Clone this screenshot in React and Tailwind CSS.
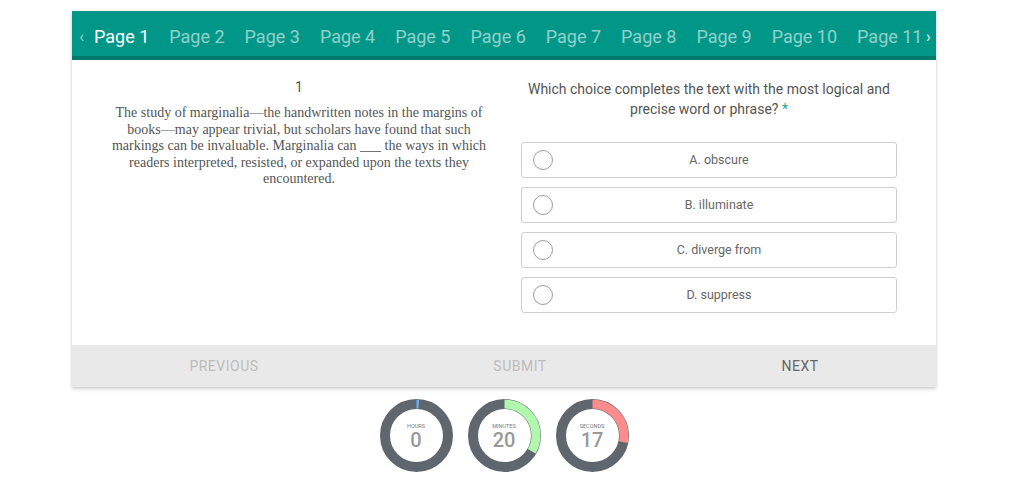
import { useState } from "react";

const pages = ["Page 1", "Page 2", "Page 3", "Page 4", "Page 5", "Page 6", "Page 7", "Page 8", "Page 9", "Page 10", "Page 11"];

const choices = ["A. obscure", "B. illuminate", "C. diverge from", "D. suppress"];

const timers = [
  { label: "HOURS", value: "0", part: 0.012, color: "#6fb1f0" },
  { label: "MINUTES", value: "20", part: 20 / 60, color: "#b2f7ae" },
  { label: "SECONDS", value: "17", part: 17 / 60, color: "#fb8c8c" },
];

export default function App() {
  const [picked, setPicked] = useState(null);

  return (
    <div className="min-h-screen bg-white pt-[11px] font-['Roboto',sans-serif]">
      <div className="ml-[72px] w-[864px] bg-white shadow-[0_2px_4px_rgba(0,0,0,0.18),0_0_2px_rgba(0,0,0,0.08)]">
        <nav className="relative flex h-[49px] items-stretch overflow-hidden border-b-[4px] border-[#00796b] bg-[#009688] pt-[6px]">
          <span className="flex w-[12px] shrink-0 items-center justify-end text-[16px] leading-none text-white/60">‹</span>
          {pages.map((page, index) => (
            <span
              key={page}
              className={`relative flex shrink-0 items-center px-[10px] text-[18px] ${index === 0 ? "text-white" : "text-white/55"}`}
            >
              {page}
              {index === 0 && <span className="absolute bottom-[-4px] left-0 right-0 h-[3px] bg-[#4db6ac]" />}
            </span>
          ))}
          <span className="absolute right-0 top-0 flex h-full w-[10px] items-center bg-[#009688] pt-[6px] text-[16px] leading-none text-white/90">›</span>
        </nav>

        <div className="grid h-[285px] grid-cols-2 px-[22px]">
          <div className="flex flex-col items-center pt-[18px] text-center">
            <div className="text-[14px] leading-[18px] text-[#555]">1</div>
            <p className="mt-[9px] w-[378px] font-['Liberation_Serif',serif] text-[14px] leading-[16.5px] text-[#555]">
              The study of marginalia—the handwritten notes in the margins of books—may appear trivial, but scholars have found that such markings can be invaluable. Marginalia can ___ the ways in which readers interpreted, resisted, or expanded upon the texts they encountered.
            </p>
          </div>

          <div className="flex flex-col items-center pt-[19px]">
            <div className="w-[372px] text-center text-[14px] leading-[20px] text-[#555]">
              Which choice completes the text with the most logical and precise word or phrase? <span className="text-[#26a69a]">*</span>
            </div>
            <div className="mt-[23px] flex w-[376px] flex-col gap-[9px]">
              {choices.map((choice, index) => (
                <button
                  key={choice}
                  type="button"
                  onClick={() => setPicked(index)}
                  className="relative flex h-[36px] items-center justify-center rounded-[3px] border border-[#cfcfcf] bg-white pl-[20px] text-[12.5px] text-[#666]"
                >
                  <span
                    className={`absolute left-[11px] top-1/2 h-[20px] w-[20px] -translate-y-1/2 rounded-full border-[1.5px] ${picked === index ? "border-[#26a69a] bg-[#26a69a]" : "border-[#9e9e9e]"}`}
                  />
                  {choice}
                </button>
              ))}
            </div>
          </div>
        </div>

        <div className="flex h-[42px] items-center bg-[#e9e9e9] text-[14px] uppercase tracking-[0.5px]">
          <span className="w-[304px] text-center text-[#bdbdbd]">Previous</span>
          <span className="w-[288px] text-center text-[#bdbdbd]">Submit</span>
          <span className="flex-1 text-center text-[#666]">Next</span>
        </div>
      </div>

      <div className="ml-[72px] mt-[12px] flex w-[864px] justify-center gap-[15px]">
        {timers.map((timer) => (
          <Ring key={timer.label} {...timer} />
        ))}
      </div>
    </div>
  );
}

function Ring({ label, value, part, color }) {
  const r = 31.5;
  const c = 2 * Math.PI * r;
  return (
    <div className="relative h-[73px] w-[73px]">
      <svg width="73" height="73" viewBox="0 0 73 73" className="absolute inset-0">
        <circle cx="36.5" cy="36.5" r={r} fill="none" stroke="#5f666d" strokeWidth="10" />
        <circle
          cx="36.5"
          cy="36.5"
          r={r}
          fill="none"
          stroke={color}
          strokeWidth="9"
          strokeDasharray={`${c * part} ${c}`}
          transform="rotate(-90 36.5 36.5)"
        />
      </svg>
      <div className="absolute inset-0 flex flex-col items-center justify-center pt-[2px]">
        <span className="text-[5.5px] leading-[7px] text-[#777]">{label}</span>
        <span className="text-[20px] font-medium leading-[21px] text-[#999]">{value}</span>
      </div>
    </div>
  );
}
